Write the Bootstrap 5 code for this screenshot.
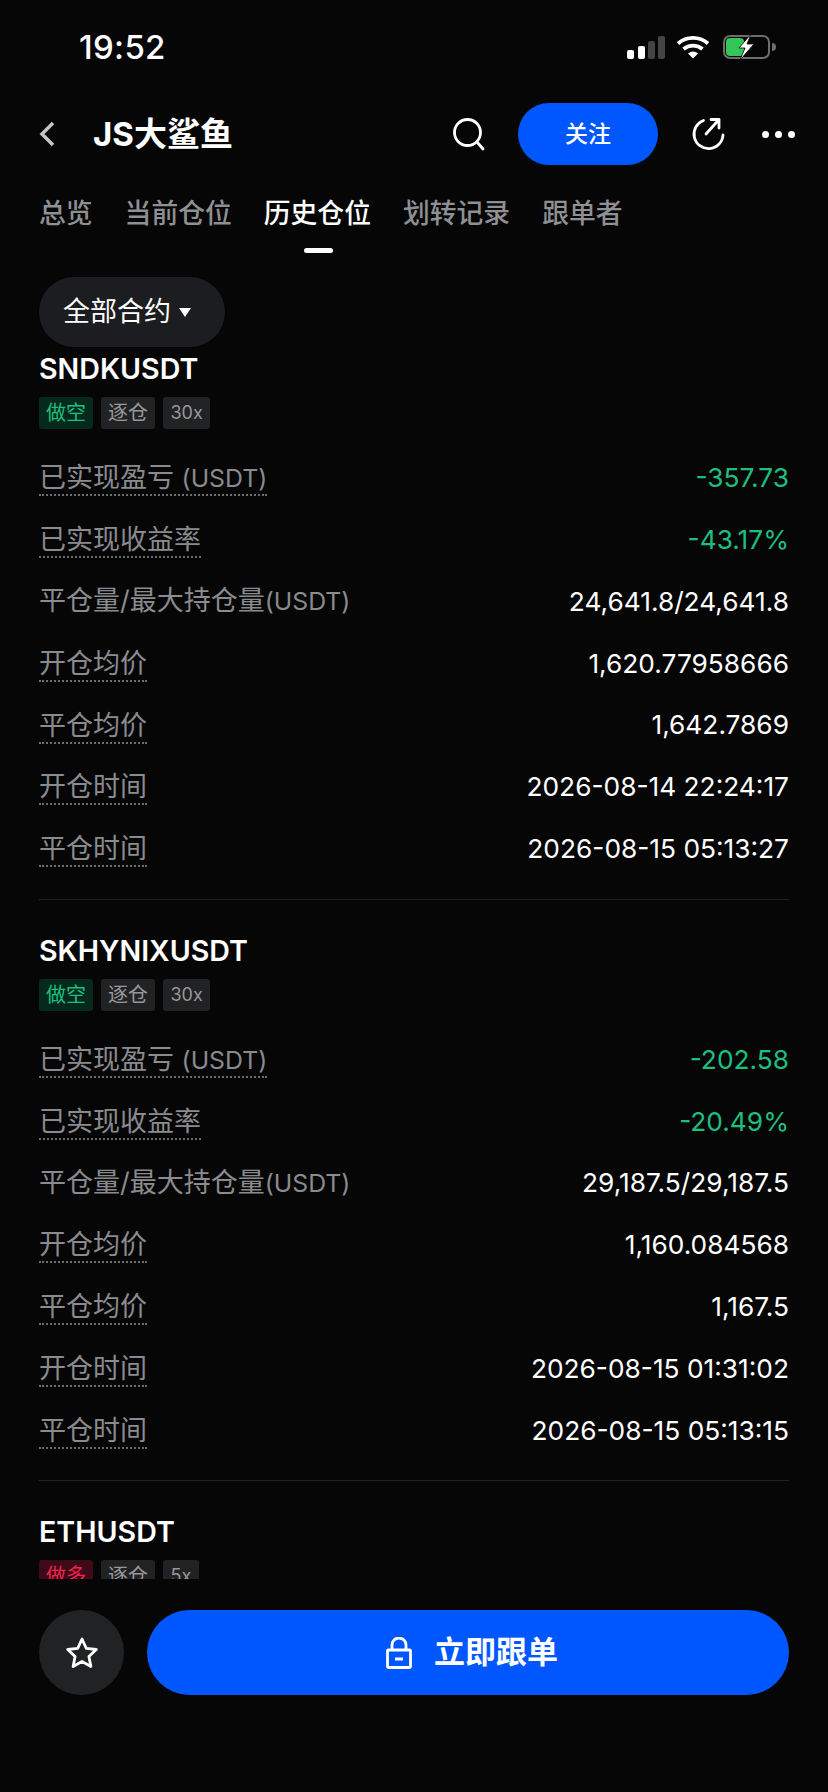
<!DOCTYPE html>
<html lang="zh-CN">
<head>
    <meta charset="UTF-8">
    <meta name="viewport" content="width=device-width, initial-scale=1.0">
    <title>JS大鲨鱼</title>
    <link href="https://cdn.jsdelivr.net/npm/bootstrap@5.3.0/dist/css/bootstrap.min.css" rel="stylesheet">
    <style>
        body {
            background: #060607;
            color: #fff;
            font-family: Inter, "Noto Sans CJK SC", sans-serif;
        }
        .app-screen { height: 1792px; width: 828px; overflow: hidden; }
        .status-row { height: 103px; padding: 27px 51px 0 79px; }
        .status-icons { margin-top: 7px; }
        .status-time { font-size: 33px; font-weight: 500; line-height: 40px; letter-spacing: .3px; }
        .top-row { height: 62px; padding: 0 33px 0 38px; }
        .shop-title { font-size: 33px; font-weight: 700; line-height: 1; margin-left: 37px; margin-right: auto; }
        .follow-btn {
            width: 140px; height: 62px; border-radius: 31px; border: 0;
            background: #0057ff; color: #fff; font-size: 23px; font-weight: 500; padding: 0;
            margin: 0 32px 0 32px;
        }
        .more-dots { margin-left: 36px; }
        .tab-row { gap: 32px; padding: 0 39px; margin-top: 28px; height: 57px; }
        .tab-item { font-size: 26.8px; font-weight: 500; color: #8f9092; line-height: 40px; position: relative; }
        .tab-item.active-tab { color: #fff; }
        .tab-item.active-tab::after {
            content: ""; position: absolute; left: 40px; width: 29px; bottom: -3px; height: 5px;
            background: #fff; border-radius: 3px;
        }
        .filter-pill {
            width: 186px; height: 70px; border-radius: 35px; border: 0; padding: 0 0 0 24px;
            margin: 27px 0 0 39px; background: #1c1d20; color: #fff; font-size: 27px;
            gap: 8px;
        }
        .caret-down { width: 0; height: 0; border-left: 6.5px solid transparent; border-right: 6.5px solid transparent; border-top: 9px solid #fff; }
        .list-clip { height: 1228px; overflow: hidden; padding: 0 39px; margin-top: 4px; flex: none; }
        .pos-block { padding-bottom: 19px; border-bottom: 1px solid #212224; margin-bottom: 33px; }
        .pos-block:last-child { border: 0; }
        .pos-name { font-size: 28.6px; font-weight: 600; line-height: 36px; margin: 0; }
        .tag-row { gap: 8px; margin-top: 10px; margin-bottom: 18px; }
        .pos-tag { height: 32px; line-height: 32px; padding: 0 7px; font-size: 20px; border-radius: 3px; background: #212224; color: #97989a; }
        .pos-tag.tag-num { font-size: 18px; padding: 0 7.5px; }
        .pos-tag.tag-short { background: #05291d; color: #1ebf7e; }
        .pos-tag.tag-long { background: #3f0a18; color: #f0254f; }
        .data-row { height: 61.8px; }
        .data-label { color: #8a8b8e; font-size: 27px; border-bottom: 2px dotted #6b6c6f; line-height: 32px; margin-top: 3px; }
        .data-label.no-dots { border-bottom: 0; margin-top: 0; }
        .data-unit { font-size: 24.8px; }
        .data-val { color: #fff; font-size: 26.3px; }
        .data-val.val-down { color: #1ebf7e; }
        .bottom-row { padding: 0 39px; gap: 23px; margin-top: 31px; }
        .star-btn { width: 85px; height: 85px; border-radius: 50%; border: 0; padding: 0; background: #212224; }
        .copy-btn {
            height: 85px; border: 0; border-radius: 43px; background: #0057ff; color: #fff;
            font-size: 31px; font-weight: 600; gap: 22px; padding-left: 14px;
        }
    </style>
</head>
<body>
    <div class="app-screen d-flex flex-column">
        <div class="status-row d-flex justify-content-between align-items-start">
            <span class="status-time">19:52</span>
            <svg width="150" height="26" viewBox="0 0 150 26" class="status-icons">
                <rect x="0" y="16" width="7" height="9" rx="2" fill="#fff"/>
                <rect x="11" y="12" width="7" height="13" rx="2" fill="#fff"/>
                <rect x="21" y="7" width="7" height="18" rx="2" fill="#444"/>
                <rect x="31" y="2" width="7" height="23" rx="2" fill="#444"/>
                <path d="M51 9.500a23 23 0 0 1 30 0" fill="none" stroke="#fff" stroke-width="3.800"/>
                <path d="M56.500 15a15 15 0 0 1 19 0" fill="none" stroke="#fff" stroke-width="3.800"/>
                <path d="M61 19.500a7.500 7.500 0 0 1 10 0l-5 5z" fill="#fff"/>
                <rect x="97" y="2" width="45" height="22" rx="6" fill="none" stroke="#6e6e6e" stroke-width="2"/>
                <rect x="99" y="4" width="18" height="18" rx="4" fill="#33c758"/>
                <path d="M145 9v8a4 4 0 0 0 0-8z" fill="#6e6e6e"/>
                <path d="M124 0l-12 14h6l-5 12 14-16h-7z" fill="#fff" stroke="#060607" stroke-width=".8"/>
            </svg>
        </div>
        <div class="top-row d-flex align-items-center">
            <svg width="18" height="28" viewBox="0 0 18 28"><path d="M15 3L4 14l11 11" fill="none" stroke="#c4c4c4" stroke-width="3.500"/></svg>
            <span class="shop-title">JS大鲨鱼</span>
            <svg width="34" height="34" viewBox="0 0 34 34"><circle cx="15.500" cy="15.500" r="13" fill="none" stroke="#fff" stroke-width="2.800"/><path d="M25 25l6 7" stroke="#fff" stroke-width="2.800" stroke-linecap="round"/></svg>
            <button class="follow-btn" type="button">关注</button>
            <svg width="36" height="36" viewBox="0 0 36 36" fill="none" stroke="#fff" stroke-width="2.800" stroke-linecap="round" stroke-linejoin="round">
                <path d="M13.500 4.500A14.500 14.500 0 1 0 33 19"/>
                <path d="M16 18L29 3.500M21 3.500h8V12"/>
            </svg>
            <svg width="33" height="7" viewBox="0 0 33 7" class="more-dots"><circle cx="3.500" cy="3.500" r="3.500" fill="#fff"/><circle cx="16.500" cy="3.500" r="3.500" fill="#fff"/><circle cx="29.500" cy="3.500" r="3.500" fill="#fff"/></svg>
        </div>
        <div class="tab-row d-flex">
            <span class="tab-item">总览</span>
            <span class="tab-item">当前仓位</span>
            <span class="tab-item active-tab">历史仓位</span>
            <span class="tab-item">划转记录</span>
            <span class="tab-item">跟单者</span>
        </div>
        <button class="filter-pill d-flex align-items-center" type="button">全部合约<span class="caret-down"></span></button>

        <div class="list-clip">
            <div class="pos-block">
                <h6 class="pos-name">SNDKUSDT</h6>
                <div class="tag-row d-flex">
                    <span class="pos-tag tag-short">做空</span><span class="pos-tag">逐仓</span><span class="pos-tag tag-num">30x</span>
                </div>
                <div class="data-row d-flex justify-content-between align-items-center"><span class="data-label">已实现盈亏 <span class="data-unit">(USDT)</span></span><span class="data-val val-down">-357.73</span></div>
                <div class="data-row d-flex justify-content-between align-items-center"><span class="data-label">已实现收益率</span><span class="data-val val-down">-43.17%</span></div>
                <div class="data-row d-flex justify-content-between align-items-center"><span class="data-label no-dots">平仓量/最大持仓量<span class="data-unit">(USDT)</span></span><span class="data-val">24,641.8/24,641.8</span></div>
                <div class="data-row d-flex justify-content-between align-items-center"><span class="data-label">开仓均价</span><span class="data-val">1,620.77958666</span></div>
                <div class="data-row d-flex justify-content-between align-items-center"><span class="data-label">平仓均价</span><span class="data-val">1,642.7869</span></div>
                <div class="data-row d-flex justify-content-between align-items-center"><span class="data-label">开仓时间</span><span class="data-val">2026-08-14 22:24:17</span></div>
                <div class="data-row d-flex justify-content-between align-items-center"><span class="data-label">平仓时间</span><span class="data-val">2026-08-15 05:13:27</span></div>
            </div>
            <div class="pos-block">
                <h6 class="pos-name">SKHYNIXUSDT</h6>
                <div class="tag-row d-flex">
                    <span class="pos-tag tag-short">做空</span><span class="pos-tag">逐仓</span><span class="pos-tag tag-num">30x</span>
                </div>
                <div class="data-row d-flex justify-content-between align-items-center"><span class="data-label">已实现盈亏 <span class="data-unit">(USDT)</span></span><span class="data-val val-down">-202.58</span></div>
                <div class="data-row d-flex justify-content-between align-items-center"><span class="data-label">已实现收益率</span><span class="data-val val-down">-20.49%</span></div>
                <div class="data-row d-flex justify-content-between align-items-center"><span class="data-label no-dots">平仓量/最大持仓量<span class="data-unit">(USDT)</span></span><span class="data-val">29,187.5/29,187.5</span></div>
                <div class="data-row d-flex justify-content-between align-items-center"><span class="data-label">开仓均价</span><span class="data-val">1,160.084568</span></div>
                <div class="data-row d-flex justify-content-between align-items-center"><span class="data-label">平仓均价</span><span class="data-val">1,167.5</span></div>
                <div class="data-row d-flex justify-content-between align-items-center"><span class="data-label">开仓时间</span><span class="data-val">2026-08-15 01:31:02</span></div>
                <div class="data-row d-flex justify-content-between align-items-center"><span class="data-label">平仓时间</span><span class="data-val">2026-08-15 05:13:15</span></div>
            </div>
            <div class="pos-block">
                <h6 class="pos-name">ETHUSDT</h6>
                <div class="tag-row d-flex">
                    <span class="pos-tag tag-long">做多</span><span class="pos-tag">逐仓</span><span class="pos-tag tag-num">5x</span>
                </div>
            </div>
        </div>

        <div class="bottom-row d-flex">
            <button class="star-btn flex-shrink-0" type="button">
                <svg width="34" height="34" viewBox="0 0 34 34"><path d="M17 3l4.300 9.300 10 1.200-7.400 6.900 2 10.100L17 25.500 8.100 30.500l2-10.100-7.400-6.900 10-1.200z" fill="none" stroke="#fff" stroke-width="2.800" stroke-linejoin="round"/></svg>
            </button>
            <button class="copy-btn flex-grow-1 d-flex align-items-center justify-content-center" type="button">
                <svg width="26" height="32" viewBox="0 0 26 32" fill="none" stroke="#fff" stroke-width="2.800"><rect x="1.500" y="13" width="23" height="17.500" rx="1"/><path d="M6 13V8a7 7 0 0 1 14 0v5M9 22h8"/></svg>
                立即跟单
            </button>
        </div>
    </div>
    <script src="https://cdn.jsdelivr.net/npm/bootstrap@5.3.0/dist/js/bootstrap.bundle.min.js"></script>
</body>
</html>
